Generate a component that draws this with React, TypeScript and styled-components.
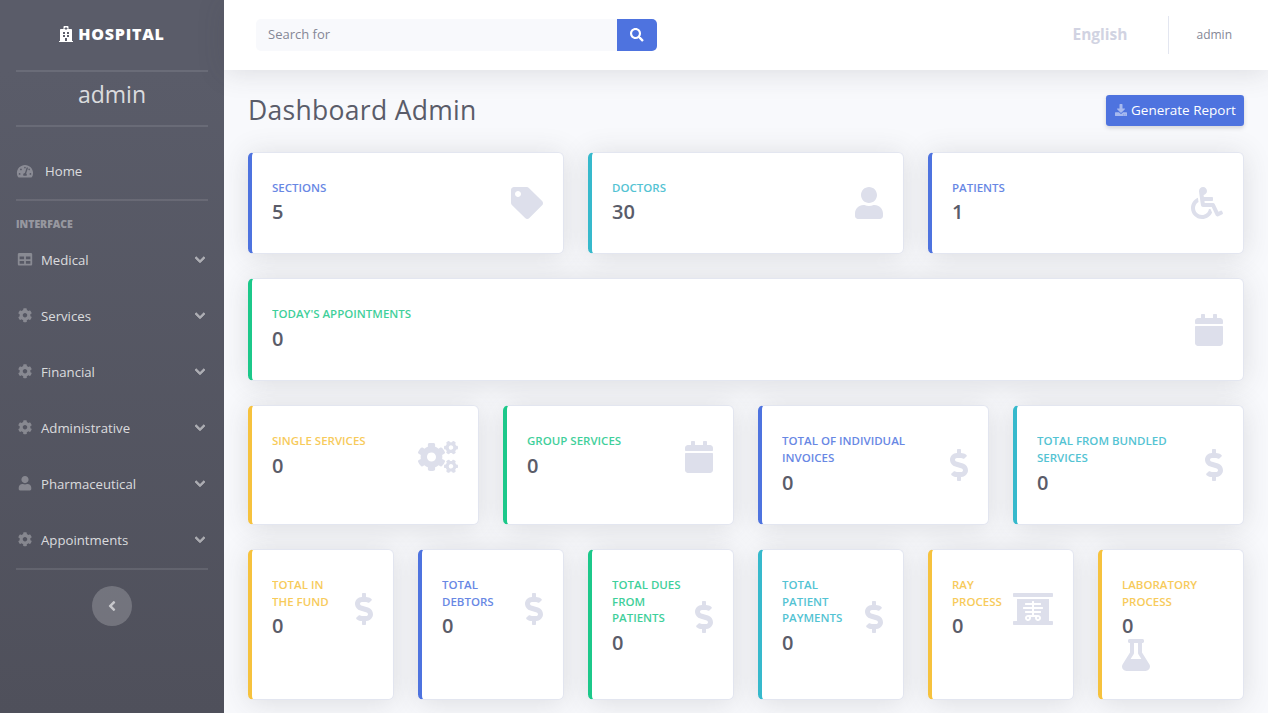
import React from "react";
import styled, { createGlobalStyle } from "styled-components";
import type { IconType } from "react-icons";
import {
  FaAngleLeft, FaCalendar, FaChevronDown, FaCog, FaCogs, FaDollarSign, FaDownload, FaFlask,
  FaHospital, FaSearch, FaTable, FaTachometerAlt, FaTag, FaUser, FaWheelchair, FaXRay,
} from "react-icons/fa";

const FONT = `"Open Sans", "Noto Sans", sans-serif`;
const BLUE = "#4e73df";
const CYAN = "#36b9cc";
const GREEN = "#1cc88a";
const YELLOW = "#f6c23e";

const Global = createGlobalStyle`
  html, body { margin: 0; padding: 0; height: 100%; overflow: hidden; }
  body { background: #f8f9fc; font-family: ${FONT}; color: #858796; }
  * { box-sizing: border-box; }
`;

const Page = styled.div`
  display: flex;
  height: 100vh;
  overflow: hidden;
`;

const Sidebar = styled.aside`
  width: 224px;
  flex: none;
  display: flex;
  flex-direction: column;
  background: linear-gradient(180deg, #5a5c69 10%, #4f505b 100%);
`;

const Brand = styled.div`
  height: 70px;
  flex: none;
  padding-bottom: 2px;
  display: flex;
  align-items: center;
  justify-content: center;
  gap: 5px;
  color: #fff;
  font-size: 16px;
  font-weight: 800;
  letter-spacing: 0.75px;
  svg { width: 14px; height: 16px; }
`;

const Divider = styled.hr<{ $after?: number }>`
  flex: none;
  width: 192px;
  height: 2px;
  border: 0;
  margin: 0 16px ${(p) => p.$after ?? 0}px;
  background: rgba(255, 255, 255, 0.1);
`;

const UserName = styled.div`
  height: 53px;
  flex: none;
  padding-top: 5px;
  text-align: center;
  font-size: 23px;
  line-height: 34px;
  color: rgba(255, 255, 255, 0.8);
`;

const NavItem = styled.div`
  height: 56px;
  flex: none;
  display: flex;
  align-items: center;
  padding: 0 19px 0 16px;
  font-size: 13.2px;
  font-weight: 500;
  color: rgba(255, 255, 255, 0.8);
`;

const NavIcon = styled.span<{ $gap: number }>`
  width: 18px;
  flex: none;
  display: flex;
  justify-content: center;
  margin-right: ${(p) => p.$gap}px;
  color: rgba(255, 255, 255, 0.3);
  svg { width: 18px; height: 14.4px; }
`;

const NavCaret = styled.span`
  margin-left: auto;
  display: flex;
  color: rgba(255, 255, 255, 0.5);
  svg { width: 10px; height: 11.5px; stroke: currentColor; stroke-width: 30; }
`;

const NavHeading = styled.div`
  padding: 1px 16px 0;
  font-size: 10.4px;
  line-height: 14.6px;
  font-weight: 800;
  color: rgba(255, 255, 255, 0.4);
`;

const CollapseButton = styled.button`
  align-self: center;
  width: 40px;
  height: 40px;
  flex: none;
  padding: 0;
  border: 0;
  border-radius: 50%;
  display: flex;
  align-items: center;
  justify-content: center;
  font-size: 16px;
  color: rgba(255, 255, 255, 0.6);
  background: rgba(255, 255, 255, 0.2);
`;

const Main = styled.main`
  flex: 1;
  min-width: 0;
  display: flex;
  flex-direction: column;
`;

const Topbar = styled.header`
  height: 70px;
  flex: none;
  margin-bottom: 24px;
  display: flex;
  align-items: center;
  padding: 0 36px 0 32px;
  background: #fff;
  box-shadow: 0 2.4px 28px rgba(58, 59, 69, 0.15);
`;

const SearchBox = styled.div`
  width: 401px;
  height: 32px;
  display: flex;
  border-radius: 5px;
  overflow: hidden;
`;

const SearchField = styled.div`
  flex: 1;
  display: flex;
  align-items: center;
  padding: 0 0 2px 12px;
  background: #f8f9fc;
  font-size: 13px;
  color: #858796;
`;

const SearchButton = styled.div`
  width: 40px;
  display: flex;
  align-items: center;
  justify-content: center;
  background: ${BLUE};
  color: #fff;
  font-size: 13.6px;
`;

const Language = styled.div`
  margin-left: auto;
  padding-bottom: 2px;
  font-size: 15.5px;
  font-weight: 700;
  color: #d1d3e2;
`;

const TopDivider = styled.div`
  width: 1px;
  height: 38px;
  margin: 0 27px 0 41px;
  background: #e3e6f0;
`;

const TopUser = styled.div`
  padding-bottom: 2px;
  font-size: 12px;
  color: #858796;
`;

const Content = styled.div`
  padding: 0 24px;
  display: flex;
  flex-direction: column;
  gap: 24px;
`;

const Heading = styled.div`
  display: flex;
  align-items: center;
  justify-content: space-between;
  height: 33.6px;
`;

const Title = styled.h1`
  margin: 0;
  font-size: 26.5px;
  font-weight: 400;
  line-height: 33.6px;
  letter-spacing: 0.3px;
  color: #5a5c69;
`;

const ReportButton = styled.button`
  width: 138px;
  height: 31px;
  padding: 0 0 2px 9px;
  border: 0;
  border-radius: 3.2px;
  display: flex;
  align-items: center;
  gap: 4px;
  font-family: ${FONT};
  font-size: 13.5px;
  white-space: nowrap;
  color: #fff;
  background: ${BLUE};
  box-shadow: 0 2px 4px rgba(58, 59, 69, 0.2);
  svg { width: 12px; height: 12px; flex: none; color: rgba(255, 255, 255, 0.5); }
`;

const Grid = styled.section<{ $cols: number }>`
  display: grid;
  grid-template-columns: repeat(${(p) => p.$cols}, minmax(0, 1fr));
  gap: 24px;
`;

const Card = styled.article<{ $accent: string }>`
  background: #fff;
  border: 1px solid #e3e6f0;
  border-left: 4px solid ${(p) => p.$accent};
  border-radius: 5.6px;
  padding: 20px;
  box-shadow: 0 2.4px 28px rgba(58, 59, 69, 0.15);
`;

const CardRow = styled.div`
  display: flex;
  flex-wrap: wrap;
  align-items: center;
  padding: 8px 0;
`;

const CardText = styled.div`
  flex: 1 1 0;
  margin: -1px 8px 1px 0;
`;

const CardLabel = styled.div<{ $accent: string }>`
  margin-bottom: 4px;
  font-size: 11.5px;
  font-weight: 600;
  line-height: 16.8px;
  text-transform: uppercase;
  color: ${(p) => p.$accent};
  opacity: 0.85;
`;

const CardValue = styled.div`
  font-size: 20px;
  font-weight: 600;
  line-height: 24px;
  color: #5a5c69;
`;

const CardIcon = styled.div<{ $width: number }>`
  flex: none;
  display: flex;
  color: #dddfeb;
  svg { width: ${(p) => p.$width}px; height: 32px; }
`;

interface Stat {
  label: string;
  value: string;
  accent: string;
  icon: IconType;
  iconWidth: number;
}

const rows: Stat[][] = [
  [
    { label: "Sections", value: "5", accent: BLUE, icon: FaTag, iconWidth: 32 },
    { label: "Doctors", value: "30", accent: CYAN, icon: FaUser, iconWidth: 28 },
    { label: "Patients", value: "1", accent: BLUE, icon: FaWheelchair, iconWidth: 32 },
  ],
  [{ label: "Today's Appointments", value: "0", accent: GREEN, icon: FaCalendar, iconWidth: 28 }],
  [
    { label: "Single Services", value: "0", accent: YELLOW, icon: FaCogs, iconWidth: 40 },
    { label: "Group Services", value: "0", accent: GREEN, icon: FaCalendar, iconWidth: 28 },
    { label: "Total of Individual Invoices", value: "0", accent: BLUE, icon: FaDollarSign, iconWidth: 18 },
    { label: "Total from Bundled Services", value: "0", accent: CYAN, icon: FaDollarSign, iconWidth: 18 },
  ],
  [
    { label: "Total in the Fund", value: "0", accent: YELLOW, icon: FaDollarSign, iconWidth: 18 },
    { label: "Total Debtors", value: "0", accent: BLUE, icon: FaDollarSign, iconWidth: 18 },
    { label: "Total Dues from Patients", value: "0", accent: GREEN, icon: FaDollarSign, iconWidth: 18 },
    { label: "Total Patient Payments", value: "0", accent: CYAN, icon: FaDollarSign, iconWidth: 18 },
    { label: "Ray Process", value: "0", accent: YELLOW, icon: FaXRay, iconWidth: 40 },
    { label: "Laboratory Process", value: "0", accent: YELLOW, icon: FaFlask, iconWidth: 28 },
  ],
];

const navItems: { label: string; icon: IconType }[] = [
  { label: "Medical", icon: FaTable },
  { label: "Services", icon: FaCog },
  { label: "Financial", icon: FaCog },
  { label: "Administrative", icon: FaCog },
  { label: "Pharmaceutical", icon: FaUser },
  { label: "Appointments", icon: FaCog },
];

export default function App() {
  return (
    <Page>
      <Global />
      <Sidebar>
        <Brand>
          <FaHospital />
          <span>HOSPITAL</span>
        </Brand>
        <Divider />
        <UserName>admin</UserName>
        <Divider $after={16} />
        <NavItem>
          <NavIcon $gap={11}>
            <FaTachometerAlt />
          </NavIcon>
          Home
        </NavItem>
        <Divider $after={15} />
        <NavHeading>INTERFACE</NavHeading>
        {navItems.map(({ label, icon: Icon }) => (
          <NavItem key={label}>
            <NavIcon $gap={7}>
              <Icon />
            </NavIcon>
            {label}
            <NavCaret>
              <FaChevronDown />
            </NavCaret>
          </NavItem>
        ))}
        <Divider $after={16} />
        <CollapseButton aria-label="Collapse sidebar">
          <FaAngleLeft />
        </CollapseButton>
      </Sidebar>
      <Main>
        <Topbar>
          <SearchBox>
            <SearchField>Search for</SearchField>
            <SearchButton>
              <FaSearch />
            </SearchButton>
          </SearchBox>
          <Language>English</Language>
          <TopDivider />
          <TopUser>admin</TopUser>
        </Topbar>
        <Content>
          <Heading>
            <Title>Dashboard Admin</Title>
            <ReportButton>
              <FaDownload />
              Generate Report
            </ReportButton>
          </Heading>
          {rows.map((row) => (
            <Grid key={row[0].label} $cols={row.length}>
              {row.map(({ label, value, accent, icon: Icon, iconWidth }) => (
                <Card key={label} $accent={accent}>
                  <CardRow>
                    <CardText>
                      <CardLabel $accent={accent}>{label}</CardLabel>
                      <CardValue>{value}</CardValue>
                    </CardText>
                    <CardIcon $width={iconWidth}>
                      <Icon />
                    </CardIcon>
                  </CardRow>
                </Card>
              ))}
            </Grid>
          ))}
        </Content>
      </Main>
    </Page>
  );
}
